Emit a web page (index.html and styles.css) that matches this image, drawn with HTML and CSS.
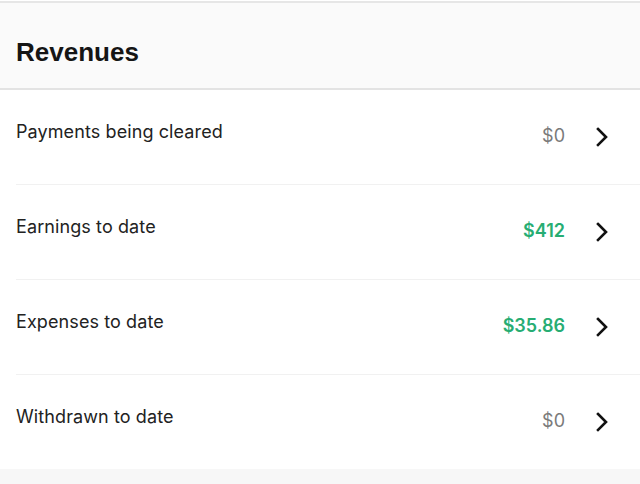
FILE: index.html
```html
<!DOCTYPE html>
<html>
<head>
<meta charset="utf-8">
<link rel="stylesheet" href="styles.css">
</head>
<body>
<div class="page">
  <div class="header"><h1 class="title">Revenues</h1></div>
  <div class="list">
    <div class="row">
      <span class="label">Payments being cleared</span>
      <span class="value">$0</span>
      <svg class="chev" viewBox="0 0 12 20" width="12" height="20"><path d="M2 2 L10 10 L2 18" fill="none" stroke="#111" stroke-width="2.6" stroke-linecap="square"/></svg>
    </div>
    <div class="row">
      <span class="label">Earnings to date</span>
      <span class="value green">$412</span>
      <svg class="chev" viewBox="0 0 12 20" width="12" height="20"><path d="M2 2 L10 10 L2 18" fill="none" stroke="#111" stroke-width="2.6" stroke-linecap="square"/></svg>
    </div>
    <div class="row">
      <span class="label">Expenses to date</span>
      <span class="value green">$35.86</span>
      <svg class="chev" viewBox="0 0 12 20" width="12" height="20"><path d="M2 2 L10 10 L2 18" fill="none" stroke="#111" stroke-width="2.6" stroke-linecap="square"/></svg>
    </div>
    <div class="row last">
      <span class="label">Withdrawn to date</span>
      <span class="value">$0</span>
      <svg class="chev" viewBox="0 0 12 20" width="12" height="20"><path d="M2 2 L10 10 L2 18" fill="none" stroke="#111" stroke-width="2.6" stroke-linecap="square"/></svg>
    </div>
  </div>
  <div class="footer"></div>
</div>
</body>
</html>
```

FILE: styles.css
```css
html, body { margin: 0; padding: 0; background: #fff; }
.page { width: 640px; height: 484px; overflow: hidden; padding-top: 1px; box-sizing: border-box; font-family: "Inter", "Liberation Sans", sans-serif; }
.header {
  height: 85px;
  background: #fafafa;
  border-top: 2px solid #e6e6e6;
  border-bottom: 2px solid #e3e3e3;
  display: flex;
  align-items: center;
  padding: 0 16px;
}
.title {
  margin: 0;
  font-family: "Liberation Sans", Arial, sans-serif;
  font-weight: 700;
  font-size: 26px;
  color: #151515;
  position: relative;
  top: 7px;
}
.list { background: #fff; }
.row {
  height: 94px;
  display: flex;
  align-items: center;
  padding: 0 32px 0 16px;
  position: relative;
}
.row::after {
  content: "";
  position: absolute;
  left: 16px; right: 0; bottom: -1px;
  height: 1px;
  background: #f1f1f1;
}
.row + .row { margin-top: 1px; }
.row.last::after { display: none; }
.label {
  flex: 1;
  font-size: 18px;
  color: #222;
  margin-bottom: 12px;
  letter-spacing: 0.1px;
}
.value {
  font-size: 18px;
  color: #7a7a7a;
  margin-right: 31px;
  margin-bottom: 3px;
}
.value.green { color: #27ad73; font-weight: 600; }
.chev { display: block; }
.footer { height: 20px; background: #f7f7f7; margin-top: 0; }
```
